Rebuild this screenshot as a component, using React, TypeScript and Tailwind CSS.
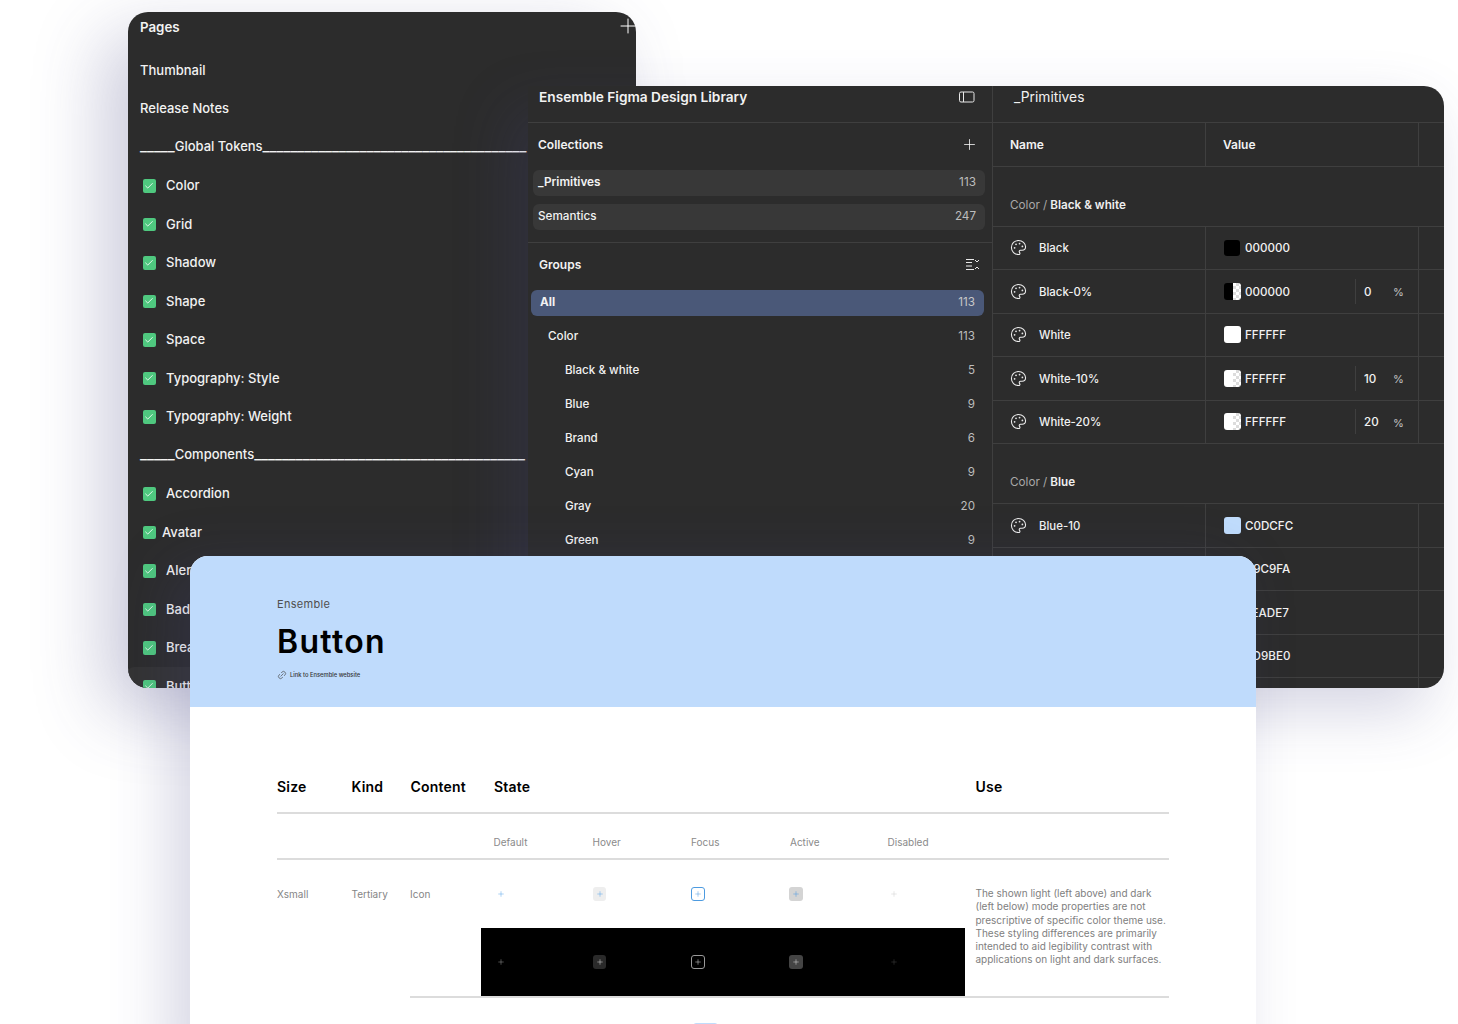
import React from 'react';
import { Check, Link2, Palette, Plus } from 'lucide-react';

const inter = "font-['Inter','Noto_Sans',sans-serif]";

const globalPages = ['Color', 'Grid', 'Shadow', 'Shape', 'Space', 'Typography: Style', 'Typography: Weight'];

const groups = [
  { name: 'Black & white', count: 5 },
  { name: 'Blue', count: 9 },
  { name: 'Brand', count: 6 },
  { name: 'Cyan', count: 9 },
  { name: 'Gray', count: 20 },
  { name: 'Green', count: 9 },
];

type Token = { name: string; hex: string; swatch: string; pct?: string };

const blackWhite: Token[] = [
  { name: 'Black', hex: '000000', swatch: 'black' },
  { name: 'Black-0%', hex: '000000', swatch: 'black-half', pct: '0' },
  { name: 'White', hex: 'FFFFFF', swatch: 'white' },
  { name: 'White-10%', hex: 'FFFFFF', swatch: 'white-half', pct: '10' },
  { name: 'White-20%', hex: 'FFFFFF', swatch: 'white-half', pct: '20' },
];

const blues: Token[] = [
  { name: 'Blue-10', hex: 'C0DCFC', swatch: 'blue' },
  { name: 'Blue-20', hex: 'A9C9FA', swatch: 'blue' },
  { name: 'Blue-30', hex: '7EADE7', swatch: 'blue' },
  { name: 'Blue-40', hex: '4D9BE0', swatch: 'blue' },
];

const PageRow = ({ label, selected, className = 'pl-[26px]' }: { label: string; selected?: boolean; className?: string }) => (
  <div className={`relative flex h-[38.5px] items-center ${selected ? 'bg-[#333333] rounded-l-md' : ''}`}>
    <div className="ml-[14.5px] flex h-[13.5px] w-[13.5px] items-center justify-center rounded-[2px] bg-[#4fc87f]">
      <Check size={10} strokeWidth={2} className="text-white" />
    </div>
    <span className={`absolute left-0 ${className} ml-[12px] text-[13px] font-medium text-[#f2f2f2]`}>{label}</span>
  </div>
);

const Divider = ({ label, tail }: { label: string; tail: number }) => (
  <div className="flex h-[38.5px] w-[400px] items-center whitespace-nowrap pb-[2px] pl-3 text-[#f2f2f2]">
    <div className="flex items-baseline font-medium">
      <span className="text-[15px]">_____</span>
      <span className="text-[13px]">{label}</span>
      <span className="text-[15px]">{'_'.repeat(tail)}</span>
    </div>
  </div>
);

const Swatch = ({ kind }: { kind: string }) => {
  if (kind === 'black') return <div className="h-4 w-4 rounded-[3px] bg-black" />;
  if (kind === 'white') return <div className="h-[17px] w-[17px] rounded-[3px] bg-white" />;
  if (kind === 'blue') return <div className="h-[17px] w-[17px] rounded-[3px] bg-[#c0dcfc]" />;
  return (
    <div className="flex h-[17px] w-[17px] overflow-hidden rounded-[3px]">
      <div className={`w-1/2 ${kind === 'black-half' ? 'bg-black' : 'bg-white'}`} />
      <div className="w-1/2 bg-[repeating-conic-gradient(#dcdcdc_0_25%,#ffffff_0_50%)] bg-[length:6px_6px]" />
    </div>
  );
};

const TokenRow = ({ token }: { token: Token }) => (
  <div className="flex h-[43.5px] border-b border-[#3f3f3f] text-[#f2f2f2]">
    <div className="flex w-[213px] items-center border-r border-[#3f3f3f] pl-[17px]">
      <Palette size={17} strokeWidth={1.5} className="text-[#ededed]" />
      <span className="ml-[12px] pt-[2px] text-[11.4px] font-medium">{token.name}</span>
    </div>
    <div className="flex w-[213px] items-center border-r border-[#3f3f3f] pl-[18px]">
      <div className="flex w-[21px]">
        <Swatch kind={token.swatch} />
      </div>
      <span className="w-[110px] pt-[2px] text-[11.6px] font-medium">{token.hex}</span>
      {token.pct && (
        <div className="flex h-[25px] items-center border-l border-[#3f3f3f] pl-[8px]">
          <span className="w-[29px] pt-[2px] text-[11.6px] font-medium">{token.pct}</span>
          <span className="pt-[2px] text-[11px] text-[#c4c4c4]">%</span>
        </div>
      )}
    </div>
  </div>
);

const GroupHeader = ({ parent, name }: { parent: string; name: string }) => (
  <div className="flex h-[60px] items-end border-b border-[#3f3f3f] pb-[11px] pl-[17px] text-[11.7px]">
    <span className="text-[#a8a8a8]">{parent} / </span>
    <span className="ml-[3px] font-semibold text-[#efefef]">{name}</span>
  </div>
);

const PlusButton = ({ box, color }: { box: string; color: string }) => (
  <div className={`flex h-[13.5px] w-[13.5px] items-center justify-center rounded-[3px] ${box}`}>
    <Plus size={8} strokeWidth={1.5} className={color} />
  </div>
);

export default function App() {
  return (
    <div className={`relative h-[1024px] w-[1458px] overflow-hidden bg-white ${inter}`}>
      {/* pages panel */}
      <div className="absolute left-[128px] top-[12px] h-[676px] w-[508px] overflow-hidden rounded-[20px] bg-[#2c2c2c] shadow-[-24px_24px_70px_rgba(70,70,130,0.28)]">
        <div className="flex h-[39px] justify-between pl-3 pt-[6px] text-[13.3px] font-semibold leading-[18px] text-[#f2f2f2]">
          <span>Pages</span>
          <Plus size={24} strokeWidth={1} className="-mr-1 -mt-[4px] text-white" />
        </div>
        <div className="flex h-[38.5px] items-center pl-3 text-[13px] font-medium text-[#f2f2f2]">Thumbnail</div>
        <div className="flex h-[38.5px] items-center pl-3 text-[13px] font-medium text-[#f2f2f2]">Release Notes</div>
        <Divider label="Global Tokens" tail={38} />
        {globalPages.map((p) => (
          <PageRow key={p} label={p} />
        ))}
        <Divider label="Components" tail={39} />
        <PageRow label="Accordion" />
        <PageRow label="Avatar" className="pl-[22px]" />
        <PageRow label="Alert" />
        <PageRow label="Badge" />
        <PageRow label="Breadcrumb" />
        <PageRow label="Button" selected />
      </div>

      {/* variables window */}
      <div className="absolute left-[528px] top-[86px] flex h-[602px] w-[916px] overflow-hidden rounded-r-[20px] bg-[#2c2c2c] shadow-[-16px_24px_60px_rgba(70,70,130,0.22)]">
        <div className="w-[465px] shrink-0 border-r border-[#3f3f3f]">
          <div className="flex h-[37px] items-start justify-between border-b border-[#3f3f3f] pl-[11px] pr-[17px]">
            <span className="text-[13.7px] font-semibold leading-[22px] text-[#f2f2f2]">Ensemble Figma Design Library</span>
            <svg width="16" height="12" viewBox="0 0 16 12" fill="none" stroke="#e8e8e8" strokeWidth="1" className="mt-[5px]">
              <rect x="0.5" y="1" width="14.5" height="10" rx="1.5" />
              <line x1="4.5" y1="1" x2="4.5" y2="11" />
            </svg>
          </div>
          <div className="flex h-[43px] items-center justify-between pl-[10px] pr-[14px] text-[12px] font-semibold text-[#f2f2f2]">
            <span>Collections</span>
            <Plus size={17} strokeWidth={1.1} className="text-white" />
          </div>
          <div className="mx-[5px] mt-[4px] flex h-[26px] w-[452px] items-center justify-between rounded-md bg-[#383838] pl-[5px] pr-[9px] text-[11.8px]">
            <span className="font-semibold text-[#f2f2f2]">_Primitives</span>
            <span className="text-[#bdbdbd]">113</span>
          </div>
          <div className="mx-[5px] mt-[8px] flex h-[26px] w-[452px] items-center justify-between rounded-md bg-[#383838] pl-[5px] pr-[9px] text-[11.7px]">
            <span className="font-medium text-[#f2f2f2]">Semantics</span>
            <span className="text-[#bdbdbd]">247</span>
          </div>
          <div className="mt-[12px] flex h-[44px] items-center justify-between border-t border-[#3f3f3f] pl-[11px] pr-[12px] text-[12px] font-semibold text-[#f2f2f2]">
            <span>Groups</span>
            <svg width="15" height="13" viewBox="0 0 15 13" fill="none" stroke="#e8e8e8" strokeWidth="1">
              <path d="M1 1.5h8M1 4.5h6M1 8h6M1 11.5h8" />
              <path d="M10 2l2 2 2-2M10 11l2-2 2 2" />
            </svg>
          </div>
          <div className="mx-[3px] mt-[3.5px] flex h-[26px] w-[453px] items-center justify-between rounded-md bg-[#4a5878] pl-[9px] pr-[9px] text-[11.7px]">
            <span className="font-bold text-[#f2f2f2]">All</span>
            <span className="text-[#c8c8c8]">113</span>
          </div>
          <div className="mt-[4px] flex h-[34px] items-center justify-between pl-[20px] pr-[17px] text-[11.7px]">
            <span className="font-medium text-[#f2f2f2]">Color</span>
            <span className="text-[#bdbdbd]">113</span>
          </div>
          {groups.map((g) => (
            <div key={g.name} className="flex h-[34px] items-center justify-between pl-[37px] pr-[17px] text-[11.6px]">
              <span className="font-medium text-[#f2f2f2]">{g.name}</span>
              <span className="text-[#bdbdbd]">{g.count}</span>
            </div>
          ))}
        </div>

        <div className="min-w-0 flex-1">
          <div className="flex h-[37px] items-start border-b border-[#3f3f3f] pl-[21px] text-[13.8px] leading-[22px] text-[#f2f2f2]">
            _Primitives
          </div>
          <div className="flex h-[43.5px] border-b border-[#3f3f3f] text-[12px] font-semibold text-[#f2f2f2]">
            <div className="flex w-[213px] items-center border-r border-[#3f3f3f] pl-[17px] pt-[1px]">Name</div>
            <div className="flex w-[213px] items-center border-r border-[#3f3f3f] pl-[17px] pt-[1px]">Value</div>
          </div>
          <GroupHeader parent="Color" name="Black & white" />
          {blackWhite.map((t) => (
            <TokenRow key={t.name} token={t} />
          ))}
          <GroupHeader parent="Color" name="Blue" />
          {blues.map((t) => (
            <TokenRow key={t.name} token={t} />
          ))}
          <div className="flex h-[43.5px]">
            <div className="w-[213px] border-r border-[#3f3f3f]" />
            <div className="w-[213px] border-r border-[#3f3f3f]" />
          </div>
        </div>
      </div>

      {/* button spec sheet */}
      <div className="absolute left-[190px] top-[556px] h-[520px] w-[1066px] rounded-t-[18px] bg-white shadow-[-20px_10px_60px_rgba(70,70,130,0.22)]">
        <div className="h-[151px] rounded-t-[18px] bg-[#bfdbfc] pl-[87px] pt-[41px]">
          <div className="text-[11px] leading-[14px] tracking-[0.3px] text-[#4f4f4f]">Ensemble</div>
          <div className="mt-[11px] text-[32px] font-semibold leading-[40px] tracking-[1.3px] text-black">Button</div>
          <div className="mt-[8px] flex items-center gap-[3px] text-[5.8px] font-medium text-[#333333]">
            <Link2 size={10} strokeWidth={1.5} className="-rotate-45 text-[#444444]" />
            <span>Link to Ensemble website</span>
          </div>
        </div>

        <div className="px-[87px]">
          <div className="mt-[63px] flex h-[44px] items-start border-b-2 border-[#dcdcdc] pt-[8px] text-[14px] font-semibold leading-[18px] tracking-[0.2px] text-black">
            <span className="w-[74.5px] shrink-0">Size</span>
            <span className="w-[59px] shrink-0">Kind</span>
            <span className="w-[83.5px] shrink-0">Content</span>
            <span className="w-[481.5px] shrink-0">State</span>
            <span>Use</span>
          </div>
          <div className="flex h-[46px] items-center border-b-2 border-[#dcdcdc] pl-[216.5px] pt-[13px] text-[10px] text-[#8a8a8a]">
            <span className="w-[99px]">Default</span>
            <span className="w-[98.5px]">Hover</span>
            <span className="w-[99px]">Focus</span>
            <span className="w-[97.5px]">Active</span>
            <span>Disabled</span>
          </div>
          <div className="flex text-[10px] text-[#858585]">
            <div className="w-[74.5px] shrink-0 pt-[27px]">Xsmall</div>
            <div className="w-[58.5px] shrink-0 pt-[27px]">Tertiary</div>
            <div className="flex min-w-0 flex-1 border-b-2 border-[#dcdcdc]">
              <div className="w-[71px] shrink-0 pt-[27px]">Icon</div>
              <div className="w-[484px] shrink-0">
                <div className="flex h-[68px] items-center gap-[84.75px] pl-[13.5px]">
                  <PlusButton box="" color="text-[#5aa5e8]" />
                  <PlusButton box="bg-[#eeeeee]" color="text-[#5aa5e8]" />
                  <PlusButton box="border border-[#4d9be0]" color="text-[#4d9be0]" />
                  <PlusButton box="bg-[#d4d4d4]" color="text-[#4d9be0]" />
                  <PlusButton box="" color="text-[#cccccc]" />
                </div>
                <div className="flex h-[68px] items-center gap-[84.75px] bg-black pl-[13.5px]">
                  <PlusButton box="" color="text-[#999999]" />
                  <PlusButton box="bg-[#2a2a2a]" color="text-[#dddddd]" />
                  <PlusButton box="border border-[#999999]" color="text-[#dddddd]" />
                  <PlusButton box="bg-[#444444]" color="text-[#dddddd]" />
                  <PlusButton box="" color="text-[#444444]" />
                </div>
              </div>
              <div className="whitespace-nowrap pl-[10.5px] pt-[27px] text-[10px] leading-[13.25px] text-[#808080]">
                The shown light (left above) and dark<br />
                (left below) mode properties are not<br />
                prescriptive of specific color theme use.<br />
                These styling differences are primarily<br />
                intended to aid legibility contrast with<br />
                applications on light and dark surfaces.
              </div>
            </div>
          </div>
          <div className="ml-[416px] mt-[25px] h-[10px] w-[25px] rounded-[3px] border border-[#c0dcfc] bg-white" />
        </div>
      </div>
    </div>
  );
}
